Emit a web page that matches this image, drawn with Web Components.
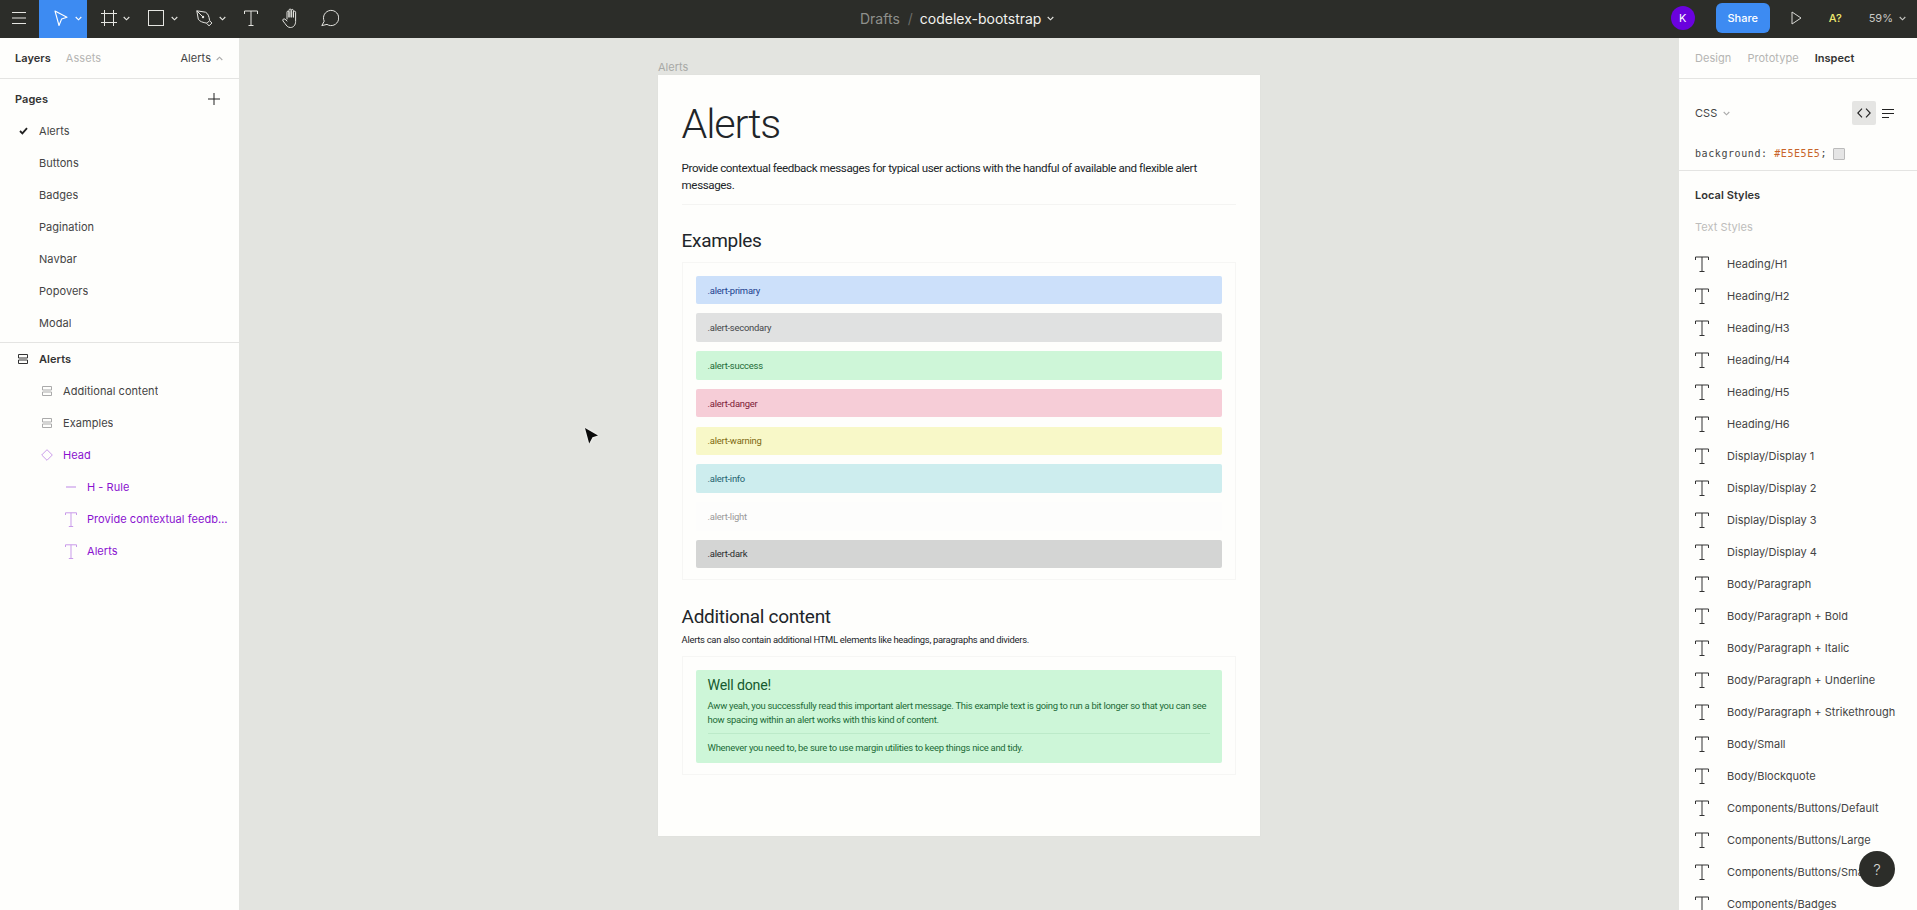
<!DOCTYPE html>
<html lang="en"><head><meta charset="utf-8"><title>codelex-bootstrap</title>
<style>
html,body{margin:0;padding:0;height:100%;overflow:hidden;background:#E3E4E0;font-family:Inter,"Liberation Sans",sans-serif}
</style></head><body>
<fig-app></fig-app>
<script>
const ICONS={
 menu:[14,12,'<path d="M0 .5H14M0 6H14M0 11.5H14" stroke="currentColor" fill="none"/>'],
 arrow:[14,17,'<path d="M1 1L13 7.3 7.6 9 5 15.5Z" stroke="currentColor" fill="none" stroke-width="1.1" stroke-linejoin="round"/>'],
 chev:[7,5,'<path d="M.7 1L3.5 3.8 6.3 1" stroke="currentColor" fill="none" stroke-width="1.1"/>'],
 frame:[16,16,'<path d="M3.5 0V16M12.5 0V16M0 3.5H16M0 12.5H16" stroke="currentColor" fill="none"/>'],
 rect:[16,16,'<rect x=".5" y=".5" width="15" height="15" stroke="currentColor" fill="none"/>'],
 pen:[17,17,'<path d="M.8.8L9.5 2.2C12 3.5 13 6 13.6 10.6L11 13.2C7 12.5 3.5 11.5 2.3 9.2ZM.8.8L6.2 6.2M11 13.6L13 15.9 15.9 13 13.9 11" stroke="currentColor" fill="none" stroke-linejoin="round"/><circle cx="7" cy="7" r="1.2" fill="currentColor"/>'],
 t:[14,16,'<path d="M.5 4V1H13.5V4M7 1V15.5M4.5 15.5H9.5" stroke="currentColor" fill="none"/>'],
 t12:[12,15,'<path d="M.5 3V.8H11.5V3M6 .8V14.5M3.8 14.5H8.2" stroke="currentColor" fill="none"/>'],
 hand:[18,20,'<path d="M5 11V4.2C5 2.6 7 2.6 7 4.2V9M7 9V2.2C7 .6 9.2.6 9.2 2.2V9M9.2 9V2.6C9.2 1 11.4 1 11.4 2.6V9M11.4 9V4.2C11.4 2.8 13.6 2.8 13.6 4.2V13.5C13.6 17 11.5 19.5 8.5 19.5 5.5 19.5 4.5 17.5 3 15.5L1 13C.2 11.5 1.8 10.2 3 11.2L5 13" stroke="currentColor" fill="none" stroke-linecap="round"/>'],
 comment:[18,18,'<path d="M3.2 12.2A7.6 7.6 0 1 1 6 15.4L.8 16.6Z" stroke="currentColor" fill="none" stroke-linejoin="round"/>'],
 play:[11,14,'<path d="M1 1L10 7 1 13Z" stroke="currentColor" fill="none"/>'],
 plus:[12,12,'<path d="M6 0V12M0 6H12" stroke="currentColor" fill="none"/>'],
 check:[9,8,'<path d="M1 4L3.4 6.4 8 1.2" stroke="currentColor" fill="none" stroke-width="1.8"/>'],
 frameh:[10,10,'<path d="M.5.5H9.5V4H.5ZM.5 6H9.5V9.5H.5Z" stroke="currentColor" fill="none"/>'],
 diamond:[12,12,'<path d="M6 .7L11.3 6 6 11.3.7 6Z" stroke="currentColor" fill="none"/>'],
 line:[10,2,'<path d="M0 1H10" stroke="currentColor" fill="none" stroke-width="1.2"/>'],
 code:[14,10,'<path d="M5 .6L.8 5 5 9.4M9 .6L13.2 5 9 9.4" stroke="currentColor" fill="none" stroke-width="1.1"/>'],
 lines:[12,9,'<path d="M0 .5H12M0 4.5H12M0 8.5H7" stroke="currentColor" fill="none"/>']
};
function def(name,css,html){
 customElements.define(name,class extends HTMLElement{
  connectedCallback(){
   if(this.shadowRoot)return;
   const r=this.attachShadow({mode:'open'});
   r.innerHTML='<style>'+css+'</style>'+(typeof html==='function'?html(this):html);
  }
 });
}
def('fig-icon',':host{display:inline-flex;flex:none;line-height:0}svg{display:block}',h=>{
 const [w,ht,p]=ICONS[h.getAttribute('name')];
 return `<svg width="${w}" height="${ht}" viewBox="0 0 ${w} ${ht}" aria-hidden="true">${p}</svg>`;
});
def('tool-btn',`:host{display:flex;align-items:center;height:38px;padding-bottom:2px;color:#E6E6E2;box-sizing:border-box}
:host([active]){background:#3D8BF2;color:#fff}
fig-icon{color:inherit}.c{margin-left:var(--cg,6px)}`,h=>{
 const chev=h.hasAttribute('chev')?'<fig-icon class="c" name="chev"></fig-icon>':'';
 return `<fig-icon name="${h.getAttribute('icon')}"></fig-icon>${chev}`;
});
def('top-bar',`:host{display:flex;align-items:flex-start;height:38px;background:#2C2D29;color:#fff;position:relative;font-size:11px;flex:none}
.l{display:flex;align-items:center;height:38px}
.c{position:absolute;left:860px;top:0;height:36px;display:flex;align-items:center;font-size:14px}
.d{color:#8F908C}.s{color:#6b6c68;margin:0 7px 0 8px}.n{color:#F2F2EE}
.c fig-icon{margin-left:6px;color:#E6E6E2}
.r{margin-left:auto;display:flex;align-items:center;height:36px}
.av{width:24px;height:24px;border-radius:50%;background:#6A02DE;color:#fff;display:flex;align-items:center;justify-content:center;font-size:11px;margin-right:21px}
.sh{width:54px;height:30px;border-radius:6px;background:#3D8BF2;display:flex;align-items:center;justify-content:center;color:#fff;font-weight:500;margin-right:21px}
.a{color:#EDE96E;margin:0 27px 0 27px;font-weight:500}
.z{color:#C8C8C4}.r fig-icon.ch{margin:0 11px 0 6px;color:#C8C8C4}.pl{color:#DADAD6}`,
`<div class="l">
<tool-btn icon="menu" style="padding-left:12px;width:39px"></tool-btn>
<tool-btn icon="arrow" chev active style="padding-left:15px;width:48px;margin-right:14px;--cg:7px"></tool-btn>
<tool-btn icon="frame" chev style="width:47px"></tool-btn>
<tool-btn icon="rect" chev style="width:48px;--cg:7px"></tool-btn>
<tool-btn icon="pen" chev style="width:48px"></tool-btn>
<tool-btn icon="t" style="width:38px"></tool-btn>
<tool-btn icon="hand" style="width:39px"></tool-btn>
<tool-btn icon="comment"></tool-btn>
</div>
<div class="c"><span class="d">Drafts</span><span class="s">/</span><span class="n">codelex-bootstrap</span><fig-icon name="chev"></fig-icon></div>
<div class="r"><div class="av">K</div><div class="sh">Share</div><fig-icon class="pl" name="play"></fig-icon><span class="a">A?</span><span class="z">59%</span><fig-icon class="ch" name="chev"></fig-icon></div>`);
def('layer-row',`:host{display:flex;align-items:center;height:32px;font-size:11px;color:#444;white-space:nowrap;letter-spacing:.05px;padding-left:calc(var(--lvl,0)*24px)}
.i{width:39px;display:flex;justify-content:center;padding-left:7px;box-sizing:border-box;color:#aaa;flex:none}
:host([strong]){font-weight:600;color:#333}:host([strong]) .i{color:#333}
:host([page]) .i{color:#222}
:host([comp]){color:#8A12D0}:host([comp]) .i{color:#C99BEA}
.lab{overflow:hidden;text-overflow:ellipsis;max-width:var(--mw,none)}`,h=>{
 const ic=h.getAttribute('icon');
 return `<div class="i">${ic?`<fig-icon name="${ic}"></fig-icon>`:''}</div><span class="lab"><slot></slot></span>`;
});
def('left-panel',`:host{display:block;width:239px;height:100%;background:#FEFEFC;flex:none;box-sizing:border-box}
.tabs{height:40px;display:flex;align-items:center;padding:0 16px 0 15px;border-bottom:1px solid #E4E4E2;font-size:11px;letter-spacing:.05px}
.on{font-weight:600;color:#333}.off{color:#B5B5B3;margin-left:15px}
.pg{margin-left:auto;color:#444}.tabs fig-icon{margin-left:5px;color:#aaa;transform:scaleY(-1)}
.ph{height:36px;box-sizing:border-box;padding:4px 19px 0 15px;display:flex;align-items:center;justify-content:space-between;font-size:11px;font-weight:600;color:#333;letter-spacing:.05px}
.ph fig-icon{color:#222}
.pages{padding-bottom:3px;border-bottom:1px solid #E4E4E2}`,
`<div class="tabs"><span class="on">Layers</span><span class="off">Assets</span><span class="pg">Alerts</span><fig-icon name="chev"></fig-icon></div>
<div class="ph"><span>Pages</span><fig-icon name="plus"></fig-icon></div>
<div class="pages">
<layer-row page icon="check">Alerts</layer-row><layer-row>Buttons</layer-row><layer-row>Badges</layer-row><layer-row>Pagination</layer-row><layer-row>Navbar</layer-row><layer-row>Popovers</layer-row><layer-row>Modal</layer-row>
</div>
<div>
<layer-row strong icon="frameh">Alerts</layer-row>
<layer-row style="--lvl:1" icon="frameh">Additional content</layer-row>
<layer-row style="--lvl:1" icon="frameh">Examples</layer-row>
<layer-row style="--lvl:1" comp icon="diamond">Head</layer-row>
<layer-row style="--lvl:2" comp icon="line">H - Rule</layer-row>
<layer-row style="--lvl:2;--mw:142px" comp icon="t12">Provide contextual feedback messages</layer-row>
<layer-row style="--lvl:2" comp icon="t12">Alerts</layer-row>
</div>`);
def('style-row',`:host{display:flex;align-items:center;height:32px;font-size:11px;color:#444;white-space:nowrap;letter-spacing:.02px}
fig-icon{margin-left:16px;margin-right:18px;color:#333}`,`<fig-icon name="t"></fig-icon><slot></slot>`);
def('right-panel',`:host{display:block;width:238px;height:100%;background:#FEFEFC;flex:none;overflow:hidden;font-size:11px;letter-spacing:.05px}
.tabs{height:40px;display:flex;align-items:center;padding-left:16px;border-bottom:1px solid #E4E4E2;gap:16px;color:#B5B5B3}
.on{font-weight:600;color:#333}
.css{height:48px;margin-top:10px;display:flex;align-items:center;padding:0 23px 0 16px;color:#444;box-sizing:border-box}
.css .ch{margin-left:6px;color:#aaa}
.cb{margin-left:auto;width:24px;height:24px;background:#E5E5E3;border-radius:2px;display:flex;align-items:center;justify-content:center;color:#222}
.css .ln{margin-left:6px;color:#222}
.code{display:flex;align-items:center;height:33px;padding-left:16px;font-family:"DejaVu Sans Mono","Liberation Mono",monospace;font-size:10px;color:#444;letter-spacing:.58px;border-bottom:1px solid #E4E4E2;white-space:pre}
.code b{font-weight:400;color:#C8642A}
.sw{width:10px;height:10px;border:1px solid #bbb;background:#E5E5E5;border-radius:1px;margin-left:6px}
h3{margin:0;font-size:11px;font-weight:600;color:#333;height:48px;line-height:48px;padding-left:16px}
.ts{color:#BDBDBB;height:14px;line-height:14px;padding-left:16px;margin:1px 0 14px}`,
`<div class="tabs"><span>Design</span><span>Prototype</span><span class="on">Inspect</span></div>
<div class="css"><span>CSS</span><fig-icon class="ch" name="chev"></fig-icon><div class="cb"><fig-icon name="code"></fig-icon></div><fig-icon class="ln" name="lines"></fig-icon></div>
<div class="code"><span>background: </span><b>#E5E5E5</b><span>;</span><span class="sw"></span></div>
<h3>Local Styles</h3><div class="ts">Text Styles</div>
${['Heading/H1','Heading/H2','Heading/H3','Heading/H4','Heading/H5','Heading/H6','Display/Display 1','Display/Display 2','Display/Display 3','Display/Display 4','Body/Paragraph','Body/Paragraph + Bold','Body/Paragraph + Italic','Body/Paragraph + Underline','Body/Paragraph + Strikethrough','Body/Small','Body/Blockquote','Components/Buttons/Default','Components/Buttons/Large','Components/Buttons/Small','Components/Badges'].map(s=>`<style-row>${s}</style-row>`).join('')}`);
def('alert-box',`:host{display:flex;align-items:center;height:28.6px;border-radius:2px;padding:0 12px;font-size:9.44px;letter-spacing:-.25px;background:var(--b);color:var(--f);box-sizing:border-box;flex:none}`,`<slot></slot>`);
def('demo-box',`:host{display:flex;flex-direction:column;border:1px solid #F6F6F4;padding:12.8px 13px 11px;box-sizing:border-box;gap:9.1px}`,`<slot></slot>`);
def('rich-alert',`:host{display:block;background:#CDF6D8;color:#1C6B37;border-radius:2px;padding:7px 12px 0;height:93px;box-sizing:border-box;font-size:9.44px;line-height:14.2px;letter-spacing:-.27px}
h4{margin:0 0 5px;font-size:14.2px;font-weight:400;line-height:17px;color:#165A2E;letter-spacing:-.2px}
p{margin:0}hr{border:0;border-top:1px solid #BCEAC9;margin:6px 0 7px}`,
`<h4>Well done!</h4><p>Aww yeah, you successfully read this important alert message. This example text is going to run a bit longer so that you can see how spacing within an alert works with this kind of content.</p><hr><p>Whenever you need to, be sure to use margin utilities to keep things nice and tidy.</p>`);
def('art-frame',`:host{position:absolute;left:419px;top:37px;width:602px;height:761px;background:#FEFEFC;box-sizing:border-box;padding:0 23.6px;color:#212529;display:block;box-shadow:0 0 1px rgba(0,0,0,.06);font-family:Roboto,Inter,sans-serif}
.lb{position:absolute;left:0;top:-15px;font-family:Inter,sans-serif;font-size:11px;color:#A8A9A6;line-height:14px}
h1{margin:0;padding-top:24px;font-size:41.3px;font-weight:300;line-height:50px;letter-spacing:-1.2px}
.lead{margin:10.5px 0 0;font-size:11.6px;line-height:17.7px;letter-spacing:-.39px}
.rule{border-top:1px solid #F4F4F2;margin-top:9.1px;height:0}
h2{margin:24px 0 10px;font-size:19px;font-weight:400;line-height:23px;letter-spacing:-.3px}
h2.a{margin:24.6px 0 5px}
.sub{margin:0 0 9px;font-size:9.44px;line-height:14px;letter-spacing:-.29px}`,
`<div class="lb">Alerts</div><h1>Alerts</h1>
<p class="lead">Provide contextual feedback messages for typical user actions with the handful of available and flexible alert messages.</p><div class="rule"></div>
<h2>Examples</h2>
<demo-box>
<alert-box style="--b:#CCE0FA;--f:#1B3F8F">.alert-primary</alert-box>
<alert-box style="--b:#E0E1E1;--f:#45484b">.alert-secondary</alert-box>
<alert-box style="--b:#CEF6D8;--f:#1C6B37">.alert-success</alert-box>
<alert-box style="--b:#F6CDD7;--f:#7C1A37">.alert-danger</alert-box>
<alert-box style="--b:#F8F8C8;--f:#7F6A10">.alert-warning</alert-box>
<alert-box style="--b:#CDEDEE;--f:#1F6470">.alert-info</alert-box>
<alert-box style="--b:#FDFDFC;--f:#999">.alert-light</alert-box>
<alert-box style="--b:#D4D5D4;--f:#2a2c2e">.alert-dark</alert-box>
</demo-box>
<h2 class="a">Additional content</h2>
<p class="sub">Alerts can also contain additional HTML elements like headings, paragraphs and dividers.</p>
<demo-box><rich-alert></rich-alert></demo-box>`);
def('free-canvas',`:host{display:block;position:relative;flex:1;background:#E3E4E0;height:100%;overflow:hidden}
.cur{position:absolute;left:345px;top:389px;filter:drop-shadow(0 0 1.5px rgba(255,255,255,.9))}`,
`<art-frame></art-frame><svg class="cur" width="15" height="18" viewBox="0 0 15 18" aria-hidden="true"><path d="M1 1L14 8.5 8.5 10.3 5.2 16.5Z" fill="#0a0a0a"/></svg>`);
def('help-btn',`:host{position:absolute;right:22px;bottom:23px;width:36px;height:36px;border-radius:50%;background:#2C2D29;color:#D8D8D4;display:flex;align-items:center;justify-content:center;font-size:15px;font-weight:300}`,`?`);
def('fig-app',`:host{display:flex;flex-direction:column;width:100%;height:100vh;position:relative;overflow:hidden}
.m{display:flex;flex:1;min-height:0}`,
`<top-bar></top-bar><div class="m"><left-panel></left-panel><free-canvas></free-canvas><right-panel></right-panel></div><help-btn></help-btn>`);
</script>
</body></html>
